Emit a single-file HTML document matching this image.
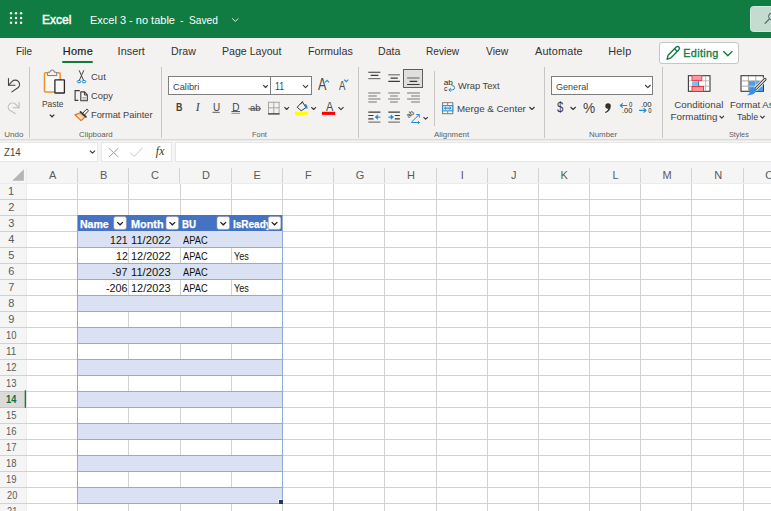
<!DOCTYPE html>
<html lang="en">
<head>
<meta charset="utf-8">
<title>Excel 3 - no table.xlsx</title>
<style>
html,body{margin:0;padding:0}
body{width:771px;height:511px;overflow:hidden;position:relative;background:#f3f2f1;font-family:"Liberation Sans",sans-serif;color:#323130}
.abs,.t,i,.band,.th,.fb,.fh{position:absolute;display:block}
.t{white-space:pre;margin:0;padding:0}
#hdr{left:0;top:0;width:771px;height:38px;background:#107c41}
#tabs{left:0;top:38px;width:771px;height:27px;background:#f3f2f1}
#ribbon{left:0;top:65px;width:771px;height:74px;background:#f3f2f1;border-bottom:1px solid #dadada}
#fbar{left:0;top:140px;width:771px;height:23px;background:#f5f5f5;border-top:1px solid #e9e9e9}
.box{position:absolute;background:#fff;border:1px solid #e6e6e6;box-sizing:border-box}
.cbox{position:absolute;background:#fff;border:1px solid #807e7c;box-sizing:border-box}
.sep{position:absolute;width:1px;background:#c8c6c4}
#sheet{left:0;top:163px;width:771px;height:348px;background:#f5f5f5}
#hline{left:0;top:183px;width:771px;height:1px;background:#ececec}
#vline{left:26px;top:168px;width:1px;height:343px;background:#ececec}
#cells{left:27px;top:184px;width:744px;height:327px;background:#fff}
.vl{top:184px;width:1px;height:327px;background:#d2d2d2}
.hs{top:168px;width:1px;height:15px;background:#d6d4d2}
.hl{left:0;width:771px;height:1px;background:#d2d2d2}
#rowhdr{left:0;top:184px;width:26px;height:327px;background:#f5f5f5}
#rh14{left:0;top:391px;width:25px;height:15px;background:#dddbd9;border-top:1px solid #c8c6c4;border-bottom:1px solid #c8c6c4}
.th{background:#4472c4}
.band{left:78px;width:204px;height:16px;background:#d9e1f2}
.bl{left:77px;width:206px;height:1px;background:#8ea9db}
.bv{top:215px;width:1px;height:289px;background:#8ea9db}
.fb{z-index:3;top:217px;width:12.5px;height:12.5px;background:#fff;border-radius:2px;box-shadow:0 0 0 .6px #9a9a9a inset;overflow:hidden}
.fb svg{position:absolute;left:0;top:0}
.fh{left:279px;top:500px;width:4px;height:4px;background:#1f3864;box-shadow:-1px -1px 0 0 #fff}
#icons{position:absolute;left:0;top:0}
</style>
</head>
<body>
<div id="hdr" class="abs"></div>
<div id="tabs" class="abs"></div>
<div id="ribbon" class="abs"></div>
<div id="fbar" class="abs"></div>

<!-- ribbon boxes -->
<div class="sep" style="left:29px;top:67px;height:71px"></div>
<div class="sep" style="left:161px;top:67px;height:71px"></div>
<div class="sep" style="left:358px;top:67px;height:71px"></div>
<div class="sep" style="left:434px;top:71px;height:55px"></div>
<div class="sep" style="left:544px;top:67px;height:71px"></div>
<div class="sep" style="left:662px;top:67px;height:71px"></div>
<div class="cbox" style="left:168px;top:76px;width:103px;height:19px"></div>
<div class="cbox" style="left:270px;top:76px;width:42px;height:19px"></div>
<div class="cbox" style="left:551px;top:76px;width:102px;height:19px"></div>
<div class="abs" style="left:403px;top:69px;width:20px;height:19px;box-sizing:border-box;background:#e1dfdd;border:1px solid #605e5c"></div>
<div class="abs" style="left:659px;top:42px;width:80px;height:22px;box-sizing:border-box;background:#fff;border:1px solid #c8c6c4;border-radius:3px"></div>
<div class="abs" style="left:62px;top:61px;width:31px;height:2px;background:#107c41;border-radius:1px"></div>

<!-- formula bar boxes -->
<div class="box" style="left:-1px;top:142px;width:99px;height:20px"></div>
<div class="box" style="left:101px;top:142px;width:71px;height:20px"></div>
<div class="box" style="left:175px;top:142px;width:600px;height:20px"></div>

<!-- sheet -->
<div id="sheet" class="abs"></div>
<div id="hline" class="abs"></div>
<div id="vline" class="abs"></div>
<div id="cells" class="abs"></div>
<div id="rowhdr" class="abs"></div>
<i class="vl" style="left:77px"></i>
<i class="vl" style="left:128px"></i>
<i class="vl" style="left:180px"></i>
<i class="vl" style="left:231px"></i>
<i class="vl" style="left:282px"></i>
<i class="vl" style="left:333px"></i>
<i class="vl" style="left:384px"></i>
<i class="vl" style="left:436px"></i>
<i class="vl" style="left:487px"></i>
<i class="vl" style="left:538px"></i>
<i class="vl" style="left:589px"></i>
<i class="vl" style="left:640px"></i>
<i class="vl" style="left:691px"></i>
<i class="vl" style="left:743px"></i>
<i class="hs" style="left:77px"></i>
<i class="hs" style="left:128px"></i>
<i class="hs" style="left:179px"></i>
<i class="hs" style="left:231px"></i>
<i class="hs" style="left:282px"></i>
<i class="hs" style="left:333px"></i>
<i class="hs" style="left:384px"></i>
<i class="hs" style="left:436px"></i>
<i class="hs" style="left:487px"></i>
<i class="hs" style="left:538px"></i>
<i class="hs" style="left:589px"></i>
<i class="hs" style="left:640px"></i>
<i class="hs" style="left:691px"></i>
<i class="hs" style="left:743px"></i>
<i class="hl" style="top:199px"></i>
<i class="hl" style="top:215px"></i>
<i class="hl" style="top:231px"></i>
<i class="hl" style="top:247px"></i>
<i class="hl" style="top:263px"></i>
<i class="hl" style="top:279px"></i>
<i class="hl" style="top:295px"></i>
<i class="hl" style="top:311px"></i>
<i class="hl" style="top:327px"></i>
<i class="hl" style="top:343px"></i>
<i class="hl" style="top:359px"></i>
<i class="hl" style="top:375px"></i>
<i class="hl" style="top:391px"></i>
<i class="hl" style="top:407px"></i>
<i class="hl" style="top:423px"></i>
<i class="hl" style="top:439px"></i>
<i class="hl" style="top:455px"></i>
<i class="hl" style="top:471px"></i>
<i class="hl" style="top:487px"></i>
<i class="hl" style="top:503px"></i>
<i class="hl" style="top:519px"></i>
<div id="rh14" class="abs"></div>
<div class="th" style="left:77px;top:215px;width:206px;height:16px"></div>
<div class="band" style="top:231px"></div>
<div class="band" style="top:263px"></div>
<div class="band" style="top:295px"></div>
<div class="band" style="top:327px"></div>
<div class="band" style="top:359px"></div>
<div class="band" style="top:391px"></div>
<div class="band" style="top:423px"></div>
<div class="band" style="top:455px"></div>
<div class="band" style="top:487px"></div>
<i class="bl" style="top:247px"></i>
<i class="bl" style="top:263px"></i>
<i class="bl" style="top:279px"></i>
<i class="bl" style="top:295px"></i>
<i class="bl" style="top:311px"></i>
<i class="bl" style="top:327px"></i>
<i class="bl" style="top:343px"></i>
<i class="bl" style="top:359px"></i>
<i class="bl" style="top:375px"></i>
<i class="bl" style="top:391px"></i>
<i class="bl" style="top:407px"></i>
<i class="bl" style="top:423px"></i>
<i class="bl" style="top:439px"></i>
<i class="bl" style="top:455px"></i>
<i class="bl" style="top:471px"></i>
<i class="bl" style="top:487px"></i>
<i class="bl" style="top:503px"></i>
<i class="bv" style="left:77px"></i><i class="bv" style="left:282px"></i>
<div class="fh"></div>

<svg id="icons" width="771" height="511" viewBox="0 0 771 511" fill="none">
<!-- header: waffle, chevron, search -->
<g fill="#fff">
<circle cx="11" cy="13.2" r="1.2"/><circle cx="16" cy="13.2" r="1.2"/><circle cx="21.1" cy="13.2" r="1.2"/>
<circle cx="11" cy="18" r="1.2"/><circle cx="16" cy="18" r="1.2"/><circle cx="21.1" cy="18" r="1.2"/>
<circle cx="11" cy="22.8" r="1.2"/><circle cx="16" cy="22.8" r="1.2"/><circle cx="21.1" cy="22.8" r="1.2"/>
</g>
<path d="M232.2 18.4 L235.3 21.4 L238.4 18.4" stroke="#e6f2ea" stroke-width="1"/>
<rect x="750.5" y="6.5" width="30" height="25" rx="3" fill="#c3dccf" stroke="#d6e8de"/>
<circle cx="772.1" cy="16.4" r="3.5" stroke="#3b5a6b" stroke-width="1"/>
<path d="M764.8 23.6 L769.2 19.2" stroke="#3b5a6b" stroke-width="1.1"/>
<!-- editing button: pencil + chevron -->
<g stroke="#107c41" stroke-width="1.35" stroke-linejoin="round" stroke-linecap="round">
<path d="M667 59.3 L668.1 55.2 L676.2 47.1 a1.9 1.9 0 0 1 2.7 2.7 L670.8 57.9 Z"/>
<path d="M674.6 48.8 L677.2 51.4"/>
<path d="M723.6 51.6 L727.8 55.8 L732 51.6"/>
</g>
<!-- undo / redo -->
<g stroke="#444" stroke-width="1.1" stroke-linecap="round" stroke-linejoin="round">
<path d="M8.5 78.6 V85.3 H15"/>
<path d="M8.7 85.1 L12.2 81.4 A4.3 4.3 0 0 1 18.3 87.5 L11.8 91.9"/>
</g>
<g stroke="#bebbb8" stroke-width="1.1" stroke-linecap="round" stroke-linejoin="round">
<path d="M19.1 102.2 V107.8 H13.4"/>
<path d="M18.9 107.6 L15.4 104.2 A4.2 4.2 0 0 0 9.4 110.1 L15.2 113.5"/>
</g>
<!-- paste -->
<rect x="44.5" y="72.7" width="15.6" height="19.4" rx="1" fill="#faf9f8" stroke="#e8912d" stroke-width="1.5"/>
<path d="M47.6 75.6 V73.2 a1 1 0 0 1 1 -1 H50 a2.2 2.2 0 0 1 4.4 0 H55.8 a1 1 0 0 1 1 1 V75.6 Z" fill="#f3f2f1" stroke="#797775" stroke-width="1"/>
<rect x="54.9" y="79.9" width="9.5" height="13.1" rx="0.3" fill="#faf9f8" stroke="#2b2a29" stroke-width="1.3"/>
<path d="M49.8 114.6 L52.05 116.8 L54.3 114.6" stroke="#323130" stroke-width="1.2"/>
<!-- cut -->
<g stroke="#444" stroke-width="1">
<path d="M79.1 70.3 L83.6 80.4"/><path d="M83.8 70.3 L79.3 80.4"/>
</g>
<ellipse cx="79" cy="81.6" rx="1.8" ry="1.2" stroke="#1e8bcd" stroke-width="1"/>
<ellipse cx="84" cy="81.6" rx="1.8" ry="1.2" stroke="#1e8bcd" stroke-width="1"/>
<!-- copy -->
<path d="M79.8 90.6 H75.1 V100.4 H78.3" stroke="#3b3a39" stroke-width="1.1"/>
<path d="M80.8 91.9 H84.6 L87.3 94.8 V100.8 H80.8 Z" fill="#faf9f8" stroke="#3b3a39" stroke-width="1.1" stroke-linejoin="round"/>
<path d="M84.4 92 V95 H87.2" stroke="#2b2a29" stroke-width="0.9"/>
<path d="M82.5 97.6 H85.8 M82.5 99.1 H85.8" stroke="#8a8886" stroke-width="0.8"/>
<!-- format painter -->
<path d="M75 114.9 L80.4 112.7 L85.2 117 L81 120.6 Z" fill="#f9d3a6" stroke="#e8731a" stroke-width="1.2" stroke-linejoin="round"/>
<path d="M78 115.6 L81.4 118.6" stroke="#fff" stroke-width="1"/>
<path d="M77.6 117.2 L80.2 119.6" stroke="#ee8a2e" stroke-width="0.9"/>
<path d="M82.7 113.3 L86 109.7 a1.25 1.25 0 0 1 1.8 1.8 L84.5 115" fill="#f3f2f1" stroke="#3b3a39" stroke-width="1" stroke-linejoin="round"/>
<path d="M80.5 111.9 L86 116.9" stroke="#3b3a39" stroke-width="1.7" stroke-linecap="round"/>
<!-- font box chevrons -->
<g stroke="#3b3a39" stroke-width="1.15" stroke-linejoin="round">
<path d="M263.3 85.2 L265.55 87.5 L267.8 85.2"/>
<path d="M303 85.2 L305.55 87.7 L308.1 85.2"/>
<path d="M645.1 85 L647.8 87.7 L650.5 85"/>
<path d="M284.4 107.2 L286.65 109.5 L288.9 107.2"/>
<path d="M311.3 107.2 L313.65 109.5 L316 107.2"/>
<path d="M338.4 107.2 L340.95 109.7 L343.5 107.2"/>
<path d="M423.5 117.1 L425.65 119.2 L427.8 117.1"/>
<path d="M529.4 107 L531.95 109.5 L534.5 107"/>
<path d="M570.5 107 L573.1 109.5 L575.7 107"/>
<path d="M719.6 115.9 L721.75 118.1 L723.9 115.9"/>
<path d="M760.3 115.9 L762.45 118.1 L764.6 115.9"/>
<path d="M89.9 150.6 L92.45 153.1 L95 150.6"/>
</g>
<!-- grow/shrink carets -->
<path d="M325.2 82.3 L327.1 80.2 L329 82.3" stroke="#1e8bcd" stroke-width="1.1"/>
<path d="M344.1 79.6 L346.2 81.7 L348.3 79.6" stroke="#1e8bcd" stroke-width="1.1"/>
<!-- underline marks -->
<path d="M212.4 112.3 H219.8" stroke="#605e5c" stroke-width="1"/>
<path d="M231.4 111.6 H240" stroke="#3b3a39" stroke-width="0.9"/><path d="M231.4 113.5 H240" stroke="#a19f9d" stroke-width="1"/>
<path d="M248.3 108.8 H261" stroke="#3b3a39" stroke-width="0.8"/>
<!-- borders icon -->
<g stroke="#a8a6a4" stroke-width="1">
<path d="M268.5 101.8 V113.2 M273.8 101.8 V113.2 M279.1 101.8 V113.2 M268 102.3 H279.6 M268 107.8 H279.6"/>
</g>
<path d="M268 113.9 H279.6" stroke="#323130" stroke-width="1.3"/>
<!-- fill bucket -->
<path d="M302.4 101.9 L306 107.6 L301.2 110.8 L297.2 107.2 Z" stroke="#3b3a39" stroke-width="1" stroke-linejoin="round"/>
<path d="M300.4 104.2 L302.6 101.4" stroke="#3b3a39" stroke-width="1"/>
<path d="M304.6 104.4 c1.6 0.7 2.5 2.2 2.3 4.2" stroke="#1e8bcd" stroke-width="1.25"/>
<rect x="294.9" y="111.8" width="13.2" height="3.1" fill="#ffff00"/>
<rect x="321.9" y="111.8" width="13.3" height="3.1" fill="#ff0000"/>
<!-- alignment icons -->
<g stroke="#3b3a39" stroke-width="1.15" stroke-linejoin="round">
<path d="M368.3 72.2 H380.4 M370.7 75.4 H378.4"/>
<path d="M390.5 78.1 H397.8 M388.3 81.4 H399.9"/>
<path d="M409.6 81.4 H417.2 M407.1 84.5 H419.6"/>
<path d="M368.3 112.1 H380.4 M368.3 115.5 H373.5 M368.3 118.8 H373.5"/>
<path d="M388.3 112.1 H399.9 M394.8 115.5 H399.9 M394.8 118.8 H399.9"/>
</g>
<g stroke="#767472" stroke-width="1.2">
<path d="M368.3 78.6 H380.4"/>
<path d="M388.3 74.8 H399.9"/>
<path d="M407.1 78 H419.6"/>
<path d="M368.3 93 H380.4 M368.3 96 H376.8 M368.3 99 H380.4 M368.3 102 H376.8"/>
<path d="M388.3 93 H399.9 M390.1 96 H397.8 M388.3 99 H399.9 M390.1 102 H397.8"/>
<path d="M407.1 93 H419.9 M411.1 96 H419.9 M407.1 99 H419.9 M411.1 102 H419.9"/>
<path d="M368.3 122.1 H380.4"/>
<path d="M388.3 122.1 H399.9"/>
</g>
<g stroke="#1e8bcd" stroke-width="1.1" stroke-linejoin="round" fill="#1e8bcd">
<path d="M380.4 117.1 H376"/><path d="M377.6 114.9 L375.1 117.1 L377.6 119.3 Z" stroke-width="0.6"/>
<path d="M388.3 117.1 H392.6"/><path d="M391 114.9 L393.5 117.1 L391 119.3 Z" stroke-width="0.6"/>
</g>
<!-- orientation -->
<text x="408.6" y="118.4" font-family="Liberation Sans, sans-serif" font-size="7" fill="#201f1e" transform="rotate(-38 408.4 118.6)">ab</text>
<g stroke="#1e8bcd" stroke-width="1" stroke-linejoin="round">
<path d="M411.3 122.3 L419.1 114.7"/>
<path d="M416.3 114.5 H419.3 V117.5"/>
<path d="M411.3 122.5 H419.4 M417.9 121.2 L419.5 122.5 L417.9 123.8"/>
</g>
<!-- wrap text icon -->
<text x="443.8" y="84.9" font-family="Liberation Sans, sans-serif" font-size="7.6" fill="#201f1e" textLength="9.1" lengthAdjust="spacingAndGlyphs">ab</text>
<text x="443.9" y="90.8" font-family="Liberation Sans, sans-serif" font-size="6.6" fill="#201f1e">c</text>
<path d="M451.6 85.6 H452.4 a2.05 2.05 0 0 1 0 4.3 H449 M450.8 88.1 L448.8 89.9 L450.8 91.7" stroke="#1e8bcd" stroke-width="1" stroke-linejoin="round"/>
<!-- merge icon -->
<rect x="442.6" y="102.7" width="10.2" height="11" stroke="#797775" stroke-width="1" fill="#fff"/>
<path d="M447.7 102.7 V105.5 M447.7 111 V113.7" stroke="#797775" stroke-width="0.9"/>
<rect x="442.6" y="105.6" width="10.2" height="5.3" fill="#cfe6f7" stroke="#1e8bcd" stroke-width="1"/>
<path d="M444.6 108.2 H450.8 M446 106.9 L444.5 108.2 L446 109.5 M449.4 106.9 L450.9 108.2 L449.4 109.5" stroke="#1e78c2" stroke-width="0.9"/>
<!-- comma style -->
<path d="M605.3 106 a2.75 2.75 0 1 1 5.5 0 c0 3.4 -2 5.8 -5.4 7 l-0.5 -0.9 c1.9 -0.9 3 -2 3.4 -3.4 a2.75 2.75 0 0 1 -3 -2.7 Z" fill="#323130"/>
<!-- inc/dec decimal -->
<g font-family="Liberation Sans, sans-serif" font-size="6.3" fill="#1b1a19">
<text x="629" y="107" textLength="3.3" lengthAdjust="spacingAndGlyphs">0</text>
<text x="622" y="113" textLength="10.3" lengthAdjust="spacingAndGlyphs">.00</text>
<text x="640.9" y="107" textLength="10.7" lengthAdjust="spacingAndGlyphs">.00</text>
<text x="648.2" y="113" textLength="3.3" lengthAdjust="spacingAndGlyphs">0</text>
</g>
<g stroke="#1e8bcd" stroke-width="1.1" stroke-linejoin="round">
<path d="M627.2 105.5 H620.6 M622.8 103.3 L620.3 105.5 L622.8 107.7"/>
<path d="M639.1 110.4 H645.8 M643.6 108.2 L646.1 110.4 L643.6 112.6"/>
</g>
<!-- conditional formatting icon -->
<rect x="688.4" y="75.7" width="21.6" height="15.6" fill="#fff" stroke="#3b3a39" stroke-width="1.1"/>
<path d="M705.6 76 V91 M689 80.8 H709.6 M689 86.2 H709.6" stroke="#b5b3b1" stroke-width="0.9"/>
<rect x="692" y="75.4" width="9.8" height="5" fill="#ff97a0" stroke="#e5383e" stroke-width="0.9"/>
<rect x="692" y="81.3" width="6.4" height="4.5" fill="#7fbdf0"/>
<path d="M698.6 81.2 V85.9" stroke="#1565c0" stroke-width="0.9"/>
<rect x="692" y="86.4" width="11.6" height="5" fill="#ff97a0" stroke="#e02a2a" stroke-width="0.9"/>
<!-- format as table icon -->
<rect x="741" y="75.7" width="22.4" height="15.6" fill="#fff" stroke="#3b3a39" stroke-width="1.1"/>
<rect x="748.6" y="81" width="14.4" height="10" fill="#4f9fe6"/>
<path d="M748.4 76 V91 M755.8 76 V81 M741.4 80.9 H763 M741.4 86.2 H748.4" stroke="#a19f9d" stroke-width="0.9"/>
<path d="M755.8 81 V91 M748.6 86.2 H763" stroke="#a9d2f5" stroke-width="0.9"/>
<path d="M765 79.4 L755.4 89" stroke="#f3f2f1" stroke-width="4.6" stroke-linecap="round"/>
<path d="M765 79.4 L755.4 89" stroke="#3b3a39" stroke-width="2.9" stroke-linecap="round"/>
<path d="M765 79.4 L755.8 88.6" stroke="#f3f2f1" stroke-width="1.1" stroke-linecap="round"/>
<path d="M752.6 87.4 c2.2 -0.6 4.2 1.4 3.6 3.4 c-0.8 2.8 -4.6 4.8 -9.4 4.4 c2 -0.8 2.6 -2 3 -3.8 c0.4 -1.8 1.2 -3.4 2.8 -4 Z" fill="#3a8fe0"/>
<!-- formula bar icons -->
<path d="M108.8 148.2 L118.4 157 M118.4 148.2 L108.8 157" stroke="#a19f9d" stroke-width="1"/>
<path d="M130.2 152.6 L134 156.4 L142.8 147.8" stroke="#c8c6c4" stroke-width="1"/>
<!-- select-all triangle -->
<path d="M23.9 169.2 V180.7 H12.2 Z" fill="#b5b5b5"/>
<rect x="24.7" y="390.3" width="1.4" height="17.5" fill="#107c41"/>

</svg>

<span class="t" style="left:41.77px;top:14px;font-size:12.4px;line-height:12.4px;transform:scaleX(0.972);transform-origin:0 0;color:#fff;-webkit-text-stroke:0.45px #fff;">Excel</span>
<span class="t" style="left:89.81px;top:15px;font-size:11.2px;line-height:11.2px;transform:scaleX(0.983);transform-origin:0 0;color:#fff;">Excel 3 - no table</span>
<span class="t" style="left:179.70px;top:15px;font-size:11.2px;line-height:11.2px;transform:scaleX(0.933);transform-origin:0 0;color:#fff;">-</span>
<span class="t" style="left:189.10px;top:15px;font-size:11.2px;line-height:11.2px;transform:scaleX(0.911);transform-origin:0 0;color:#fff;">Saved</span>
<span class="t" style="left:15.54px;top:46px;font-size:10.9px;line-height:10.9px;transform:scaleX(0.912);transform-origin:0 0;color:#323130;">File</span>
<span class="t" style="left:117.60px;top:46px;font-size:10.9px;line-height:10.9px;letter-spacing:0.010px;color:#323130;">Insert</span>
<span class="t" style="left:170.81px;top:46px;font-size:10.9px;line-height:10.9px;transform:scaleX(0.976);transform-origin:0 0;color:#323130;">Draw</span>
<span class="t" style="left:221.71px;top:46px;font-size:10.9px;line-height:10.9px;transform:scaleX(0.972);transform-origin:0 0;color:#323130;">Page Layout</span>
<span class="t" style="left:307.61px;top:46px;font-size:10.9px;line-height:10.9px;transform:scaleX(0.987);transform-origin:0 0;color:#323130;">Formulas</span>
<span class="t" style="left:377.72px;top:46px;font-size:10.9px;line-height:10.9px;transform:scaleX(0.970);transform-origin:0 0;color:#323130;">Data</span>
<span class="t" style="left:425.94px;top:46px;font-size:10.9px;line-height:10.9px;transform:scaleX(0.929);transform-origin:0 0;color:#323130;">Review</span>
<span class="t" style="left:485.98px;top:46px;font-size:10.9px;line-height:10.9px;transform:scaleX(0.955);transform-origin:0 0;color:#323130;">View</span>
<span class="t" style="left:535.00px;top:46px;font-size:10.9px;line-height:10.9px;letter-spacing:0.150px;color:#323130;">Automate</span>
<span class="t" style="left:608.30px;top:46px;font-size:10.9px;line-height:10.9px;letter-spacing:0.167px;color:#323130;">Help</span>
<span class="t" style="left:62.75px;top:46px;font-size:10.9px;line-height:10.9px;letter-spacing:0.333px;color:#201f1e;-webkit-text-stroke:0.2px #201f1e;">Home</span>
<span class="t" style="left:683.25px;top:48px;font-size:10.9px;line-height:10.9px;letter-spacing:0.300px;color:#0e7a3e;-webkit-text-stroke:0.3px #0e7a3e;">Editing</span>
<span class="t" style="left:4.30px;top:131px;font-size:8.0px;line-height:8.0px;letter-spacing:0.050px;color:#605e5c;">Undo</span>
<span class="t" style="left:79.10px;top:131px;font-size:8.0px;line-height:8.0px;transform:scaleX(0.984);transform-origin:0 0;color:#605e5c;">Clipboard</span>
<span class="t" style="left:252.47px;top:131px;font-size:8.0px;line-height:8.0px;transform:scaleX(0.929);transform-origin:0 0;color:#605e5c;">Font</span>
<span class="t" style="left:434.09px;top:131px;font-size:8.0px;line-height:8.0px;transform:scaleX(0.989);transform-origin:0 0;color:#605e5c;">Alignment</span>
<span class="t" style="left:589.25px;top:131px;font-size:8.0px;line-height:8.0px;transform:scaleX(0.988);transform-origin:0 0;color:#605e5c;">Number</span>
<span class="t" style="left:728.60px;top:131px;font-size:8.0px;line-height:8.0px;transform:scaleX(0.909);transform-origin:0 0;color:#605e5c;">Styles</span>
<span class="t" style="left:42.29px;top:99px;font-size:9.8px;line-height:9.8px;transform:scaleX(0.856);transform-origin:0 0;color:#444240;">Paste</span>
<span class="t" style="left:90.76px;top:72px;font-size:9.8px;line-height:9.8px;transform:scaleX(0.970);transform-origin:0 0;color:#444240;">Cut</span>
<span class="t" style="left:90.77px;top:91px;font-size:9.8px;line-height:9.8px;transform:scaleX(0.953);transform-origin:0 0;color:#444240;">Copy</span>
<span class="t" style="left:91.03px;top:110px;font-size:9.8px;line-height:9.8px;transform:scaleX(0.949);transform-origin:0 0;color:#444240;">Format Painter</span>
<span class="t" style="left:173.30px;top:82px;font-size:9.8px;line-height:9.8px;transform:scaleX(0.944);transform-origin:0 0;color:#444240;">Calibri</span>
<span class="t" style="left:274.79px;top:82px;font-size:10.2px;line-height:10.2px;transform:scaleX(0.857);transform-origin:0 0;color:#444240;">11</span>
<span class="t" style="left:175.79px;top:102px;font-size:10.6px;line-height:10.6px;transform:scaleX(0.840);transform-origin:0 0;font-weight:700;color:#444240;">B</span>
<span class="t" style="left:196.18px;top:102px;font-size:11.6px;line-height:11.6px;transform:scaleX(0.904);transform-origin:0 0;font-style:italic;font-family:'Liberation Serif',serif;color:#444240;-webkit-text-stroke:0.2px #444240;">I</span>
<span class="t" style="left:212.96px;top:103px;font-size:10.4px;line-height:10.4px;transform:scaleX(0.957);transform-origin:0 0;color:#444240;">U</span>
<span class="t" style="left:232.25px;top:103px;font-size:10.0px;line-height:10.0px;color:#444240;">D</span>
<span class="t" style="left:249.80px;top:103px;font-size:9.8px;line-height:9.8px;transform:scaleX(0.973);transform-origin:0 0;color:#444240;">ab</span>
<span class="t" style="left:318.10px;top:77px;font-size:15.6px;line-height:15.6px;transform:scaleX(0.809);transform-origin:0 0;color:#4a4846;">A</span>
<span class="t" style="left:338.79px;top:80px;font-size:12.2px;line-height:12.2px;transform:scaleX(0.789);transform-origin:0 0;color:#4a4846;">A</span>
<span class="t" style="left:325.94px;top:101px;font-size:12.4px;line-height:12.4px;transform:scaleX(0.886);transform-origin:0 0;color:#4a4846;">A</span>
<span class="t" style="left:457.84px;top:81px;font-size:9.8px;line-height:9.8px;transform:scaleX(0.951);transform-origin:0 0;color:#444240;">Wrap Text</span>
<span class="t" style="left:457.40px;top:104px;font-size:9.8px;line-height:9.8px;transform:scaleX(0.995);transform-origin:0 0;color:#444240;">Merge &amp; Center</span>
<span class="t" style="left:555.60px;top:82px;font-size:9.8px;line-height:9.8px;transform:scaleX(0.924);transform-origin:0 0;color:#444240;">General</span>
<span class="t" style="left:557.30px;top:100px;font-size:14.4px;line-height:14.4px;transform:scaleX(0.800);transform-origin:0 0;color:#3b3a39;">$</span>
<span class="t" style="left:582.70px;top:101px;font-size:14.6px;line-height:14.6px;transform:scaleX(0.938);transform-origin:0 0;color:#444240;">%</span>
<span class="t" style="left:674.15px;top:100px;font-size:9.8px;line-height:9.8px;letter-spacing:0.020px;color:#444240;">Conditional</span>
<span class="t" style="left:670.40px;top:112px;font-size:9.8px;line-height:9.8px;letter-spacing:0.033px;color:#444240;">Formatting</span>
<span class="t" style="left:730.42px;top:100px;font-size:9.8px;line-height:9.8px;transform:scaleX(0.973);transform-origin:0 0;color:#444240;">Format As</span>
<span class="t" style="left:737.11px;top:112px;font-size:9.8px;line-height:9.8px;transform:scaleX(0.902);transform-origin:0 0;color:#444240;">Table</span>
<span class="t" style="left:3.57px;top:147px;font-size:11.0px;line-height:11.0px;transform:scaleX(0.879);transform-origin:0 0;color:#444240;">Z14</span>
<span class="t" style="left:155.75px;top:146px;font-size:11.5px;line-height:11.5px;letter-spacing:0.300px;font-style:italic;font-family:'Liberation Serif',serif;color:#323130;">fx</span>
<span class="t" style="left:48.97px;top:170px;font-size:11.0px;line-height:11.0px;color:#5c5a58;">A</span>
<span class="t" style="left:99.92px;top:170px;font-size:11.0px;line-height:11.0px;color:#5c5a58;">B</span>
<span class="t" style="left:151.00px;top:170px;font-size:11.0px;line-height:11.0px;color:#5c5a58;">C</span>
<span class="t" style="left:201.95px;top:170px;font-size:11.0px;line-height:11.0px;color:#5c5a58;">D</span>
<span class="t" style="left:253.40px;top:170px;font-size:11.0px;line-height:11.0px;color:#5c5a58;">E</span>
<span class="t" style="left:304.97px;top:170px;font-size:11.0px;line-height:11.0px;color:#5c5a58;">F</span>
<span class="t" style="left:355.68px;top:170px;font-size:11.0px;line-height:11.0px;color:#5c5a58;">G</span>
<span class="t" style="left:407.00px;top:170px;font-size:11.0px;line-height:11.0px;color:#5c5a58;">H</span>
<span class="t" style="left:460.70px;top:170px;font-size:11.0px;line-height:11.0px;color:#5c5a58;">I</span>
<span class="t" style="left:510.90px;top:170px;font-size:11.0px;line-height:11.0px;color:#5c5a58;">J</span>
<span class="t" style="left:560.48px;top:170px;font-size:11.0px;line-height:11.0px;color:#5c5a58;">K</span>
<span class="t" style="left:612.43px;top:170px;font-size:11.0px;line-height:11.0px;color:#5c5a58;">L</span>
<span class="t" style="left:662.38px;top:170px;font-size:11.0px;line-height:11.0px;color:#5c5a58;">M</span>
<span class="t" style="left:714.20px;top:170px;font-size:11.0px;line-height:11.0px;color:#5c5a58;">N</span>
<span class="t" style="left:765.15px;top:170px;font-size:11.0px;line-height:11.0px;color:#5c5a58;">O</span>
<span class="t" style="left:8.05px;top:186px;font-size:11.0px;line-height:11.0px;color:#5c5a58;">1</span>
<span class="t" style="left:8.30px;top:202px;font-size:11.0px;line-height:11.0px;color:#5c5a58;">2</span>
<span class="t" style="left:8.18px;top:218px;font-size:11.0px;line-height:11.0px;color:#5c5a58;">3</span>
<span class="t" style="left:8.30px;top:234px;font-size:11.0px;line-height:11.0px;color:#5c5a58;">4</span>
<span class="t" style="left:8.18px;top:250px;font-size:11.0px;line-height:11.0px;color:#5c5a58;">5</span>
<span class="t" style="left:8.18px;top:266px;font-size:11.0px;line-height:11.0px;color:#5c5a58;">6</span>
<span class="t" style="left:8.30px;top:282px;font-size:11.0px;line-height:11.0px;color:#5c5a58;">7</span>
<span class="t" style="left:8.18px;top:298px;font-size:11.0px;line-height:11.0px;color:#5c5a58;">8</span>
<span class="t" style="left:8.18px;top:314px;font-size:11.0px;line-height:11.0px;color:#5c5a58;">9</span>
<span class="t" style="left:6.49px;top:330px;font-size:11.0px;line-height:11.0px;transform:scaleX(0.858);transform-origin:0 0;color:#5c5a58;">10</span>
<span class="t" style="left:6.47px;top:346px;font-size:11.0px;line-height:11.0px;transform:scaleX(0.916);transform-origin:0 0;color:#5c5a58;">11</span>
<span class="t" style="left:6.49px;top:362px;font-size:11.0px;line-height:11.0px;transform:scaleX(0.858);transform-origin:0 0;color:#5c5a58;">12</span>
<span class="t" style="left:6.49px;top:378px;font-size:11.0px;line-height:11.0px;transform:scaleX(0.858);transform-origin:0 0;color:#5c5a58;">13</span>
<span class="t" style="left:5.99px;top:394px;font-size:10.8px;line-height:10.8px;transform:scaleX(0.857);transform-origin:0 0;font-weight:700;color:#0e703e;">14</span>
<span class="t" style="left:6.49px;top:410px;font-size:11.0px;line-height:11.0px;transform:scaleX(0.858);transform-origin:0 0;color:#5c5a58;">15</span>
<span class="t" style="left:6.49px;top:426px;font-size:11.0px;line-height:11.0px;transform:scaleX(0.858);transform-origin:0 0;color:#5c5a58;">16</span>
<span class="t" style="left:6.49px;top:442px;font-size:11.0px;line-height:11.0px;transform:scaleX(0.858);transform-origin:0 0;color:#5c5a58;">17</span>
<span class="t" style="left:6.49px;top:458px;font-size:11.0px;line-height:11.0px;transform:scaleX(0.858);transform-origin:0 0;color:#5c5a58;">18</span>
<span class="t" style="left:6.49px;top:474px;font-size:11.0px;line-height:11.0px;transform:scaleX(0.858);transform-origin:0 0;color:#5c5a58;">19</span>
<span class="t" style="left:6.70px;top:490px;font-size:11.0px;line-height:11.0px;transform:scaleX(0.841);transform-origin:0 0;color:#5c5a58;">20</span>
<span class="t" style="left:6.70px;top:506px;font-size:11.0px;line-height:11.0px;transform:scaleX(0.841);transform-origin:0 0;color:#5c5a58;">21</span>
<span class="t" style="left:79.60px;top:219px;font-size:10.5px;line-height:10.5px;transform:scaleX(1.005);transform-origin:0 0;font-weight:700;color:#fff;-webkit-text-stroke:0.25px #fff;">Name</span>
<span class="t" style="left:130.88px;top:219px;font-size:10.5px;line-height:10.5px;transform:scaleX(1.033);transform-origin:0 0;font-weight:700;color:#fff;-webkit-text-stroke:0.25px #fff;">Month</span>
<span class="t" style="left:182.14px;top:219px;font-size:10.5px;line-height:10.5px;transform:scaleX(0.925);transform-origin:0 0;font-weight:700;color:#fff;-webkit-text-stroke:0.25px #fff;">BU</span>
<span class="t" style="left:233.33px;top:219px;font-size:10.5px;line-height:10.5px;transform:scaleX(0.951);transform-origin:0 0;font-weight:700;color:#fff;-webkit-text-stroke:0.25px #fff;">IsReady</span>
<span class="t" style="left:109.99px;top:235px;font-size:10.5px;line-height:10.5px;transform:scaleX(1.009);transform-origin:0 0;color:#111;">121</span>
<span class="t" style="left:131.16px;top:235px;font-size:10.5px;line-height:10.5px;transform:scaleX(1.066);transform-origin:0 0;color:#111;">11/2022</span>
<span class="t" style="left:182.83px;top:235px;font-size:10.5px;line-height:10.5px;transform:scaleX(0.888);transform-origin:0 0;color:#111;">APAC</span>
<span class="t" style="left:115.79px;top:251px;font-size:10.5px;line-height:10.5px;transform:scaleX(1.009);transform-origin:0 0;color:#111;">12</span>
<span class="t" style="left:131.17px;top:251px;font-size:10.5px;line-height:10.5px;transform:scaleX(1.045);transform-origin:0 0;color:#111;">12/2022</span>
<span class="t" style="left:182.83px;top:251px;font-size:10.5px;line-height:10.5px;transform:scaleX(0.888);transform-origin:0 0;color:#111;">APAC</span>
<span class="t" style="left:233.91px;top:251px;font-size:10.5px;line-height:10.5px;transform:scaleX(0.863);transform-origin:0 0;color:#111;">Yes</span>
<span class="t" style="left:112.25px;top:267px;font-size:10.5px;line-height:10.5px;transform:scaleX(1.010);transform-origin:0 0;color:#111;">-97</span>
<span class="t" style="left:131.16px;top:267px;font-size:10.5px;line-height:10.5px;transform:scaleX(1.066);transform-origin:0 0;color:#111;">11/2023</span>
<span class="t" style="left:182.83px;top:267px;font-size:10.5px;line-height:10.5px;transform:scaleX(0.888);transform-origin:0 0;color:#111;">APAC</span>
<span class="t" style="left:106.24px;top:283px;font-size:10.5px;line-height:10.5px;transform:scaleX(1.020);transform-origin:0 0;color:#111;">-206</span>
<span class="t" style="left:131.17px;top:283px;font-size:10.5px;line-height:10.5px;transform:scaleX(1.045);transform-origin:0 0;color:#111;">12/2023</span>
<span class="t" style="left:182.83px;top:283px;font-size:10.5px;line-height:10.5px;transform:scaleX(0.888);transform-origin:0 0;color:#111;">APAC</span>
<span class="t" style="left:233.91px;top:283px;font-size:10.5px;line-height:10.5px;transform:scaleX(0.863);transform-origin:0 0;color:#111;">Yes</span>
<svg id="filters" width="771" height="511" viewBox="0 0 771 511" fill="none" style="position:absolute;left:0;top:0">
<rect x="113.7" y="216.6" width="12.7" height="12.8" rx="2" fill="#fff" stroke="#8a8a8a" stroke-width="0.6"/>
<path d="M117.20 222.1 L120.05 224.8 L122.90 222.1" stroke="#1b1a19" stroke-width="1.2"/>
<rect x="166.0" y="216.6" width="12.7" height="12.8" rx="2" fill="#fff" stroke="#8a8a8a" stroke-width="0.6"/>
<path d="M169.50 222.1 L172.35 224.8 L175.20 222.1" stroke="#1b1a19" stroke-width="1.2"/>
<rect x="216.9" y="216.6" width="12.7" height="12.8" rx="2" fill="#fff" stroke="#8a8a8a" stroke-width="0.6"/>
<path d="M220.40 222.1 L223.25 224.8 L226.10 222.1" stroke="#1b1a19" stroke-width="1.2"/>
<rect x="268.2" y="216.6" width="12.7" height="12.8" rx="2" fill="#fff" stroke="#8a8a8a" stroke-width="0.6"/>
<path d="M271.70 222.1 L274.55 224.8 L277.40 222.1" stroke="#1b1a19" stroke-width="1.2"/>
</svg>
</body>
</html>
